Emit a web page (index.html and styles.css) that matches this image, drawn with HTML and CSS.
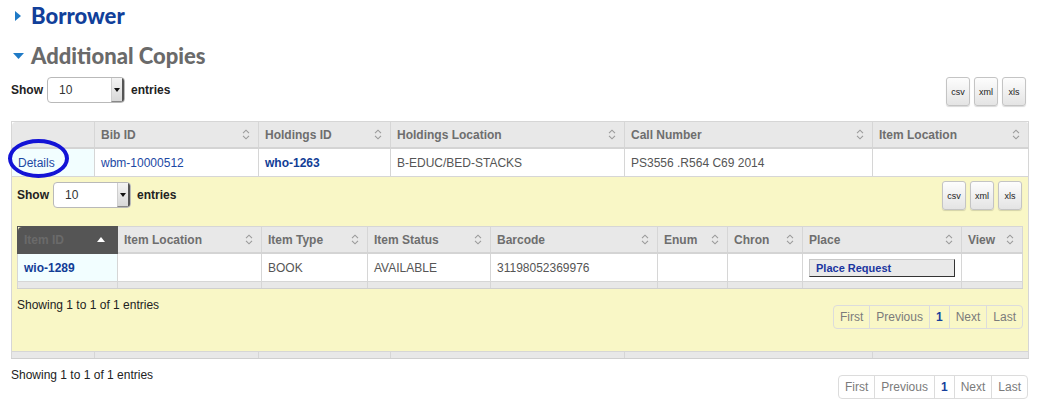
FILE: index.html
```html
<!DOCTYPE html>
<html>
<head>
<meta charset="utf-8">
<link rel="stylesheet" href="styles.css">
</head>
<body>
<div class="page">
  <h2 class="sec sec-closed"><span class="tri"><svg width="6" height="10" viewBox="0 0 6 10"><path d="M0 0 L6 5 L0 10 Z" fill="#1f7ac6"/></svg></span>Borrower</h2>
  <h2 class="sec sec-open"><span class="tri"><svg width="11" height="6" viewBox="0 0 11 6"><path d="M0 0 L11 0 L5.5 6 Z" fill="#1f7ac6"/></svg></span>Additional Copies</h2>

  <div class="dt">
    <div class="dt-top">
      <div class="len"><b>Show</b><span class="sel"><span class="sel-val">10</span><span class="sel-arrow"><svg width="6" height="4" viewBox="0 0 6 4"><path d="M0 0 L6 0 L3 4 Z" fill="#111"/></svg></span></span><b>entries</b></div>
      <div class="btns"><span class="btn">csv</span><span class="btn">xml</span><span class="btn">xls</span></div>
    </div>

    <table class="grid outer">
      <colgroup><col class="c83"><col class="c164"><col class="c132"><col class="c234"><col class="c248"><col class="c156"></colgroup>
      <thead>
        <tr>
          <th></th>
          <th><div class="th"><span>Bib ID</span><svg class="sort" width="8" height="11" viewBox="0 0 8 11"><path d="M1 4.2 L4 1.2 L7 4.2 M1 6.8 L4 9.8 L7 6.8" fill="none" stroke="#9a9a9a" stroke-width="1.1"/></svg></div></th>
          <th><div class="th"><span>Holdings ID</span><svg class="sort" width="8" height="11" viewBox="0 0 8 11"><path d="M1 4.2 L4 1.2 L7 4.2 M1 6.8 L4 9.8 L7 6.8" fill="none" stroke="#9a9a9a" stroke-width="1.1"/></svg></div></th>
          <th><div class="th"><span>Holdings Location</span><svg class="sort" width="8" height="11" viewBox="0 0 8 11"><path d="M1 4.2 L4 1.2 L7 4.2 M1 6.8 L4 9.8 L7 6.8" fill="none" stroke="#9a9a9a" stroke-width="1.1"/></svg></div></th>
          <th><div class="th"><span>Call Number</span><svg class="sort" width="8" height="11" viewBox="0 0 8 11"><path d="M1 4.2 L4 1.2 L7 4.2 M1 6.8 L4 9.8 L7 6.8" fill="none" stroke="#9a9a9a" stroke-width="1.1"/></svg></div></th>
          <th><div class="th"><span>Item Location</span><svg class="sort" width="8" height="11" viewBox="0 0 8 11"><path d="M1 4.2 L4 1.2 L7 4.2 M1 6.8 L4 9.8 L7 6.8" fill="none" stroke="#9a9a9a" stroke-width="1.1"/></svg></div></th>
        </tr>
      </thead>
      <tbody>
        <tr>
          <td class="sorted details-cell"><a class="lnk">Details</a><span class="circle"></span></td>
          <td><a class="lnk">wbm-10000512</a></td>
          <td><a class="lnk strong">who-1263</a></td>
          <td>B-EDUC/BED-STACKS</td>
          <td>PS3556 .R564 C69 2014</td>
          <td></td>
        </tr>
        <tr class="child">
          <td colspan="6">
            <div class="dt">
              <div class="dt-top">
                <div class="len"><b>Show</b><span class="sel"><span class="sel-val">10</span><span class="sel-arrow"><svg width="6" height="4" viewBox="0 0 6 4"><path d="M0 0 L6 0 L3 4 Z" fill="#111"/></svg></span></span><b>entries</b></div>
                <div class="btns"><span class="btn">csv</span><span class="btn">xml</span><span class="btn">xls</span></div>
              </div>
              <table class="grid inner">
                <colgroup><col class="c100"><col class="c144"><col class="c106"><col class="c123"><col class="c167"><col class="c70"><col class="c75"><col class="c159"><col class="c61"></colgroup>
                <thead>
                  <tr>
                    <th class="active"><div class="th"><span>Item ID</span><svg class="sort" width="8" height="5" viewBox="0 0 8 5"><path d="M0 5 L4 0 L8 5 Z" fill="#fff"/></svg></div></th>
                    <th><div class="th"><span>Item Location</span><svg class="sort" width="8" height="11" viewBox="0 0 8 11"><path d="M1 4.2 L4 1.2 L7 4.2 M1 6.8 L4 9.8 L7 6.8" fill="none" stroke="#9a9a9a" stroke-width="1.1"/></svg></div></th>
                    <th><div class="th"><span>Item Type</span><svg class="sort" width="8" height="11" viewBox="0 0 8 11"><path d="M1 4.2 L4 1.2 L7 4.2 M1 6.8 L4 9.8 L7 6.8" fill="none" stroke="#9a9a9a" stroke-width="1.1"/></svg></div></th>
                    <th><div class="th"><span>Item Status</span><svg class="sort" width="8" height="11" viewBox="0 0 8 11"><path d="M1 4.2 L4 1.2 L7 4.2 M1 6.8 L4 9.8 L7 6.8" fill="none" stroke="#9a9a9a" stroke-width="1.1"/></svg></div></th>
                    <th><div class="th"><span>Barcode</span><svg class="sort" width="8" height="11" viewBox="0 0 8 11"><path d="M1 4.2 L4 1.2 L7 4.2 M1 6.8 L4 9.8 L7 6.8" fill="none" stroke="#9a9a9a" stroke-width="1.1"/></svg></div></th>
                    <th><div class="th"><span>Enum</span><svg class="sort" width="8" height="11" viewBox="0 0 8 11"><path d="M1 4.2 L4 1.2 L7 4.2 M1 6.8 L4 9.8 L7 6.8" fill="none" stroke="#9a9a9a" stroke-width="1.1"/></svg></div></th>
                    <th><div class="th"><span>Chron</span><svg class="sort" width="8" height="11" viewBox="0 0 8 11"><path d="M1 4.2 L4 1.2 L7 4.2 M1 6.8 L4 9.8 L7 6.8" fill="none" stroke="#9a9a9a" stroke-width="1.1"/></svg></div></th>
                    <th><div class="th"><span>Place</span><svg class="sort" width="8" height="11" viewBox="0 0 8 11"><path d="M1 4.2 L4 1.2 L7 4.2 M1 6.8 L4 9.8 L7 6.8" fill="none" stroke="#9a9a9a" stroke-width="1.1"/></svg></div></th>
                    <th><div class="th"><span>View</span><svg class="sort" width="8" height="11" viewBox="0 0 8 11"><path d="M1 4.2 L4 1.2 L7 4.2 M1 6.8 L4 9.8 L7 6.8" fill="none" stroke="#9a9a9a" stroke-width="1.1"/></svg></div></th>
                  </tr>
                </thead>
                <tbody>
                  <tr>
                    <td class="sorted"><a class="lnk strong">wio-1289</a></td>
                    <td></td>
                    <td>BOOK</td>
                    <td>AVAILABLE</td>
                    <td>31198052369976</td>
                    <td></td>
                    <td></td>
                    <td><span class="req">Place Request</span></td>
                    <td></td>
                  </tr>
                </tbody>
                <tfoot>
                  <tr><td></td><td></td><td></td><td></td><td></td><td></td><td></td><td></td><td></td></tr>
                </tfoot>
              </table>
              <div class="dt-bottom inner-bottom">
                <div class="info">Showing 1 to 1 of 1 entries</div>
                <div class="pager"><span>First</span><span>Previous</span><span class="cur">1</span><span>Next</span><span>Last</span></div>
              </div>
            </div>
          </td>
        </tr>
      </tbody>
      <tfoot>
        <tr><td></td><td></td><td></td><td></td><td></td><td></td></tr>
      </tfoot>
    </table>

    <div class="dt-bottom">
      <div class="info">Showing 1 to 1 of 1 entries</div>
      <div class="pager"><span>First</span><span>Previous</span><span class="cur">1</span><span>Next</span><span>Last</span></div>
    </div>
  </div>
</div>
</body>
</html>
```

FILE: styles.css
```css
html, body {
  margin: 0;
  padding: 0;
  background: #fff;
}

body {
  font-family: "Liberation Sans", Arial, sans-serif;
  font-size: 12px;
  color: #333;
}

.page {
  padding: 0 11px;
}

.sec {
  margin: 0;
  display: flex;
  align-items: center;
  height: 30px;
  line-height: 30px;
  font-family: Lato, "Open Sans", sans-serif;
  font-weight: 900;
  font-size: 22px;
  margin-left: -11px;
}

.sec .tri {
  width: 31px;
  display: flex;
  justify-content: flex-end;
  box-sizing: border-box;
}

.sec-closed {
  color: #113f9a;
  margin-top: 1px;
}

.sec-closed .tri {
  padding-right: 10px;
}

.sec-open {
  color: #6a6a6a;
  margin-top: 10px;
}

.sec-open .tri {
  padding-right: 7px;
}

.dt-top {
  display: flex;
  justify-content: space-between;
  align-items: flex-start;
  margin-top: 6px;
  height: 29px;
}

.len {
  display: flex;
  align-items: center;
  height: 26px;
  color: #222;
}

.len b {
  font-weight: bold;
}

.sel {
  display: inline-flex;
  width: 78px;
  height: 26px;
  box-sizing: border-box;
  margin: 0 6px 0 4px;
  border: 1px solid #b9b9b9;
  border-radius: 4px;
  background: #fff;
  overflow: hidden;
}

.sel-val {
  flex: 1;
  padding-left: 11px;
  line-height: 24px;
  font-size: 12px;
  color: #333;
}

.sel-arrow {
  width: 10px;
  display: flex;
  align-items: center;
  justify-content: center;
  background: linear-gradient(#f4f4f4, #d8d8d8);
  border-left: 1px solid #cfcfcf;
  border-right: 2px solid #555;
  border-bottom: 1px solid #888;
}

.btns {
  display: flex;
  gap: 4px;
  margin-right: 2px;
}

.btn {
  display: flex;
  align-items: center;
  justify-content: center;
  width: 24px;
  height: 29px;
  box-sizing: border-box;
  border: 1px solid #c4c4c4;
  border-radius: 3px;
  background: linear-gradient(#fdfdfd, #e4e4e4);
  box-shadow: 0 1px 1px rgba(0,0,0,0.15);
  font-size: 9px;
  color: #222;
}

.grid {
  width: 100%;
  border-collapse: collapse;
  table-layout: fixed;
  margin-top: 15px;
}

.c83 { width: 83px; }
.c164 { width: 164px; }
.c132 { width: 132px; }
.c234 { width: 234px; }
.c248 { width: 248px; }
.c156 { width: 156px; }
.c100 { width: 100px; }
.c144 { width: 144px; }
.c106 { width: 106px; }
.c123 { width: 123px; }
.c167 { width: 167px; }
.c70 { width: 70px; }
.c75 { width: 75px; }
.c159 { width: 159px; }
.c61 { width: 61px; }

.grid th {
  height: 25px;
  padding: 0 6px 0 6px;
  background: #e8e8e8;
  border: 1px solid #d6d6d6;
  border-bottom: 2px solid #d4d4d4;
  text-align: left;
  font-weight: bold;
  color: #6e6e6e;
  white-space: nowrap;
}

.grid thead th:first-child { border-top-left-radius: 4px; }
.grid thead th:last-child { border-top-right-radius: 4px; }

.th {
  display: flex;
  justify-content: space-between;
  align-items: center;
  padding-right: 2px;
}

.grid th.active {
  background: #555;
  color: #6a6a6a;
  border-color: #555;
}

.grid th.active .th {
  padding-right: 6px;
}

.grid td {
  height: 27px;
  padding: 0 6px;
  border: 1px solid #d6d6d6;
  background: #fff;
  color: #555;
  white-space: nowrap;
}

.grid td.sorted {
  background: #f2feff;
}

.lnk {
  color: #1c48a4;
}

.lnk.strong {
  font-weight: bold;
  color: #113d96;
}

.details-cell {
  position: relative;
  padding-left: 7px;
}

.circle {
  position: absolute;
  left: -4px;
  top: -10px;
  width: 61px;
  height: 39px;
  box-sizing: border-box;
  border: 4px solid #1313d6;
  border-radius: 50%;
}

.grid tr.child > td {
  background: #f9f7c6;
  padding: 0 5px 0 5px;
  height: auto;
  vertical-align: top;
}

.child .dt-top {
  margin-top: 4px;
}

.child .len {
  margin-top: 1px;
}

.child .btns {
  margin-right: 1px;
}

.grid.inner {
  margin-top: 16px;
}

.grid tfoot td {
  height: 6px;
  padding: 0;
  background: #e8e8e8;
  border-color: #d6d6d6;
  border-bottom: 1px solid #cfcfcf;
}

.grid.inner tfoot td:first-child { border-bottom-left-radius: 4px; }
.grid.inner tfoot td:last-child { border-bottom-right-radius: 4px; }

.req {
  display: block;
  height: 18px;
  line-height: 17px;
  box-sizing: border-box;
  padding-left: 6px;
  background: #e9e9e9;
  border: 1px solid #c8c8c8;
  border-right: 1px solid #333;
  border-bottom: 1px solid #333;
  font-size: 11px;
  font-weight: bold;
  color: #1a35a0;
}

.dt-bottom {
  display: flex;
  justify-content: space-between;
  align-items: flex-start;
}

.info {
  margin-top: 8px;
  line-height: 16px;
  color: #222;
}

.pager {
  display: flex;
  margin-top: 16px;
  border: 1px solid #dcdcdc;
  border-radius: 4px;
  height: 24px;
  box-sizing: border-box;
}

.pager span {
  display: flex;
  align-items: center;
  padding: 0 6px;
  color: #7b7b7b;
  border-left: 1px solid #dcdcdc;
}

.pager span:first-child {
  border-left: none;
}

.pager span.cur {
  color: #163f9c;
  font-weight: bold;
}

.inner-bottom {
  margin-bottom: 22px;
}
```
